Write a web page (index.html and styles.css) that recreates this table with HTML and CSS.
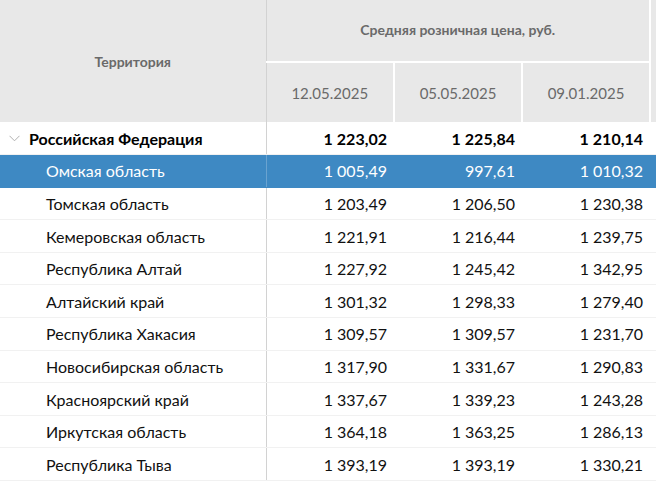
FILE: index.html
```
<!DOCTYPE html>
<html lang="ru">
<head>
<meta charset="utf-8">
<link rel="stylesheet" href="styles.css">
</head>
<body>
<div class="wrap">
<table class="grid">
  <colgroup>
    <col class="c-name"><col class="c-num"><col class="c-num"><col class="c-num"><col class="c-extra">
  </colgroup>
  <thead>
    <tr class="h1">
      <th class="h-name" rowspan="2">Территория</th>
      <th class="h-group" colspan="3">Средняя розничная цена, руб.</th>
      <th class="h-extra" rowspan="2"></th>
    </tr>
    <tr class="h2">
      <th class="h-date">12.05.2025</th>
      <th class="h-date">05.05.2025</th>
      <th class="h-date">09.01.2025</th>
    </tr>
  </thead>
  <tbody>
    <tr class="total">
      <td class="name"><svg class="chev" width="11" height="7" viewBox="0 0 11 7"><polyline points="0.5,0.8 5.5,5.8 10.5,0.8" fill="none" stroke="#b0b0b0" stroke-width="1"/></svg>Российская Федерация</td>
      <td>1&#8239;223,02</td><td>1&#8239;225,84</td><td>1&#8239;210,14</td><td></td>
    </tr>
    <tr class="sel">
      <td class="name sub">Омская область</td>
      <td>1&#8239;005,49</td><td>997,61</td><td>1&#8239;010,32</td><td></td>
    </tr>
    <tr>
      <td class="name sub">Томская область</td>
      <td>1&#8239;203,49</td><td>1&#8239;206,50</td><td>1&#8239;230,38</td><td></td>
    </tr>
    <tr>
      <td class="name sub">Кемеровская область</td>
      <td>1&#8239;221,91</td><td>1&#8239;216,44</td><td>1&#8239;239,75</td><td></td>
    </tr>
    <tr>
      <td class="name sub">Республика Алтай</td>
      <td>1&#8239;227,92</td><td>1&#8239;245,42</td><td>1&#8239;342,95</td><td></td>
    </tr>
    <tr>
      <td class="name sub">Алтайский край</td>
      <td>1&#8239;301,32</td><td>1&#8239;298,33</td><td>1&#8239;279,40</td><td></td>
    </tr>
    <tr>
      <td class="name sub">Республика Хакасия</td>
      <td>1&#8239;309,57</td><td>1&#8239;309,57</td><td>1&#8239;231,70</td><td></td>
    </tr>
    <tr>
      <td class="name sub">Новосибирская область</td>
      <td>1&#8239;317,90</td><td>1&#8239;331,67</td><td>1&#8239;290,83</td><td></td>
    </tr>
    <tr>
      <td class="name sub">Красноярский край</td>
      <td>1&#8239;337,67</td><td>1&#8239;339,23</td><td>1&#8239;243,28</td><td></td>
    </tr>
    <tr>
      <td class="name sub">Иркутская область</td>
      <td>1&#8239;364,18</td><td>1&#8239;363,25</td><td>1&#8239;286,13</td><td></td>
    </tr>
    <tr>
      <td class="name sub">Республика Тыва</td>
      <td>1&#8239;393,19</td><td>1&#8239;393,19</td><td>1&#8239;330,21</td><td></td>
    </tr>
  </tbody>
</table>
</div>
</body>
</html>
```
FILE: styles.css
```
html, body {
  margin: 0;
  padding: 0;
  background: #fff;
}
.wrap {
  width: 656px;
  height: 482px;
  overflow: hidden;
}
.grid {
  table-layout: fixed;
  border-collapse: collapse;
  width: 670px;
  font-family: "Lato", "Noto Sans", sans-serif;
  font-size: 16px;
  color: #111;
}
.c-name { width: 266px; }
.c-num { width: 128px; }
.c-extra { width: 20px; }
thead th {
  background: #e8e8e8;
  color: #6a6a6a;
  font-size: 14px;
  padding: 0;
  border-right: 2px solid #fff;
  border-bottom: 2px solid #fff;
}
.h1 { height: 62px; }
.h2 { height: 60px; }
.h-name {
  border-right: 1px solid #d2d2d2 !important;
  border-bottom: 0 !important;
  font-weight: 700;
}
.h-group { font-weight: 700; vertical-align: middle; padding-bottom: 2px; }
.h-date { font-weight: 400; font-size: 15px; border-bottom: 0 !important; }
.h-extra { border-bottom: 0 !important; }
tbody tr { height: 32.6px; }
tbody td {
  padding: 0 7px 0 0;
  text-align: right;
  border-bottom: 1px solid #f1f1f1;
  white-space: nowrap;
}
tbody td.name {
  text-align: left;
  padding-left: 29px;
  border-right: 1px solid #d2d2d2;
  position: relative;
}
tbody td.sub { padding-left: 46px; }
.chev {
  position: absolute;
  left: 9px;
  top: 13px;
}
.total td { font-weight: 700; color: #000; }
.sel td {
  background: #3e89c3;
  color: #fff;
  border-bottom-color: #3e89c3;
}
.sel td.name { border-right-color: #6aa3d0; }
```
